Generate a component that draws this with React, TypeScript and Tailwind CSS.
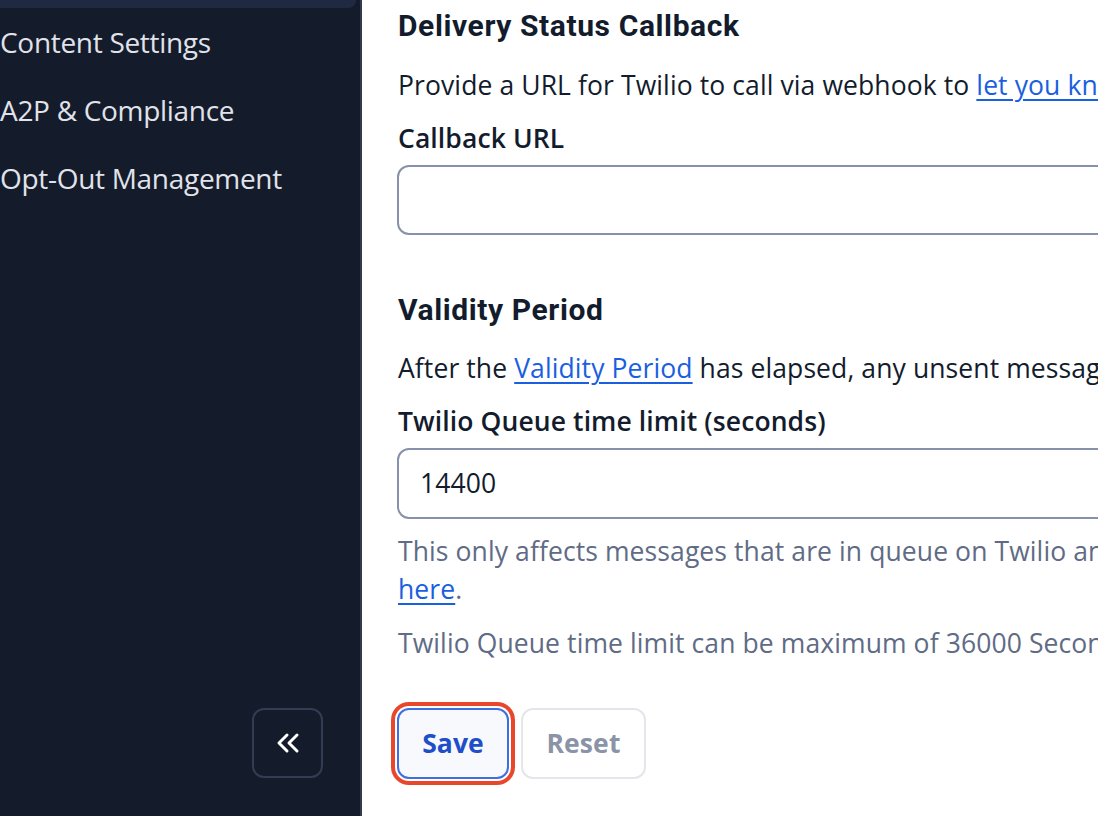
const navItems = ['Content Settings', 'A2P & Compliance', 'Opt-Out Management'];

function Sidebar() {
  return (
    <aside className="w-[362px] shrink-0 h-full bg-[#141b2b] border-r-2 border-[#323b4e] flex flex-col justify-between font-['Open_Sans',sans-serif]">
      <div>
        <div className="h-[8px] mr-[4px] bg-[#1f2a42] rounded-br-[8px]"></div>
        {navItems.map((item) => (
          <div key={item} className="h-[68px] flex items-center text-[28px] tracking-[-0.3px] text-[#e1e3ea] whitespace-nowrap">
            {item}
          </div>
        ))}
      </div>
      <div className="flex justify-end pr-[37px] pb-[38px]">
        <button className="w-[71px] h-[70px] rounded-[12px] border-2 border-[#323c52] flex items-center justify-center">
          <svg width="24" height="22" viewBox="0 0 24 22" fill="none" stroke="#ffffff" strokeWidth="3" strokeLinecap="round" strokeLinejoin="round">
            <path d="M11 3 L3 11 L11 19" />
            <path d="M21 3 L13 11 L21 19" />
          </svg>
        </button>
      </div>
    </aside>
  );
}

function Section({
  title,
  children,
}: {
  title: string;
  children: React.ReactNode;
}) {
  return (
    <section>
      <h2 className="font-['Roboto',sans-serif] text-[30px] leading-[40px] font-bold text-[#121c2d] tracking-[0.6px]">{title}</h2>
      {children}
    </section>
  );
}

const link = 'text-[#1a5fe0] underline underline-offset-[4px] decoration-[1.5px]';

export default function App() {
  return (
    <div className="w-[1098px] h-[816px] overflow-hidden flex bg-white">
      <Sidebar />
      <main className="flex-1 min-w-0 overflow-hidden pl-[36px] pt-[6px] font-['Open_Sans',sans-serif] text-[26.5px] tracking-[0.1px]">
        <div className="w-[1200px]">
          <Section title="Delivery Status Callback">
            <p className="mt-[20px] leading-[38px] text-[#121c2d] whitespace-nowrap">
              Provide a URL for Twilio to call via webhook to{' '}
              <a className={link}>let you know when a message is delivered</a>.
            </p>
            <label className="block mt-[15px] leading-[38px] font-semibold text-[#121c2d]">Callback URL</label>
            <div className="mt-[8px] -ml-[1px] h-[70px] rounded-[12px] border-2 border-[#8891aa] bg-white"></div>
          </Section>

          <div className="mt-[55px]">
            <Section title="Validity Period">
              <p className="mt-[19px] leading-[38px] text-[#121c2d] whitespace-nowrap">
                After the <a className={link}>Validity Period</a> has elapsed, any unsent messages will fail to send.
              </p>
              <label className="block mt-[15px] leading-[38px] font-semibold text-[#121c2d]">
                Twilio Queue time limit (seconds)
              </label>
              <div className="mt-[8px] -ml-[1px] h-[71px] rounded-[12px] border-2 border-[#8891aa] bg-white flex items-center pl-[21px] text-[#121c2d]">
                14400
              </div>
              <p className="mt-[13px] leading-[38px] text-[#606b85]">
                <span className="whitespace-nowrap">This only affects messages that are in queue on Twilio and not messages queued by carriers. Learn more</span>
                <br />
                <a className={link}>here</a>.
              </p>
              <p className="mt-[16px] leading-[38px] text-[#606b85] whitespace-nowrap">
                Twilio Queue time limit can be maximum of 36000 Seconds.
              </p>
            </Section>
          </div>

          <div className="mt-[46px] -ml-[1px] flex gap-[12px]">
            <button className="w-[112px] h-[71px] rounded-[12px] border-2 border-[#3d6fe0] bg-[#f7f9fd] font-bold text-[#1f4fc8] ring-4 ring-[#e8472c] ring-offset-2 ring-offset-white">
              Save
            </button>
            <button className="w-[125px] h-[71px] rounded-[12px] border-2 border-[#e4e6ec] bg-white font-bold text-[#8b93a7]">
              Reset
            </button>
          </div>
        </div>
      </main>
    </div>
  );
}
